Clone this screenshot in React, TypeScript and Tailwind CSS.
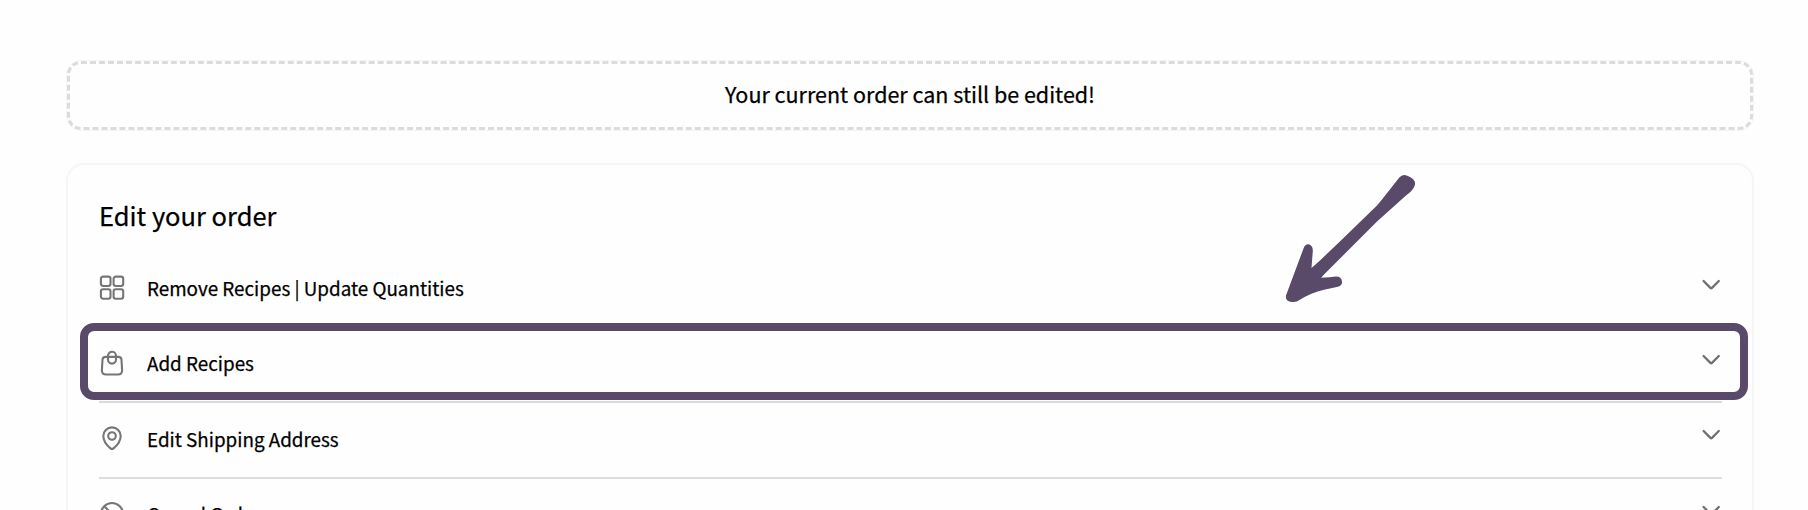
import type { ReactNode } from "react";

type Row = { label: string; icon: ReactNode; highlighted?: boolean };

const iconClass = "block h-[26px] w-[26px] fill-none stroke-[#757575]";

const GridIcon = () => (
  <svg viewBox="0 0 26 26" className={iconClass} strokeWidth="2.1">
    <rect x="1.9" y="1.6" width="9.6" height="9.4" rx="2.2" />
    <rect x="14.6" y="1.6" width="9.6" height="9.4" rx="2.2" />
    <rect x="1.9" y="14.3" width="9.6" height="9.4" rx="2.2" />
    <rect x="14.6" y="14.3" width="9.6" height="9.4" rx="2.2" />
  </svg>
);

const BagIcon = () => (
  <svg viewBox="0 0 26 26" className={iconClass} strokeWidth="2.1" strokeLinejoin="round">
    <path d="M6.6 6.9H19.4Q22.3 6.9 22.5 9.8L23.1 20.3Q23.2 24.5 19 24.5H7Q2.8 24.5 2.9 20.3L3.5 9.8Q3.7 6.9 6.6 6.9Z" />
    <rect x="9" y="1.8" width="8" height="11.8" rx="4" />
  </svg>
);

const PinIcon = () => (
  <svg viewBox="0 0 26 26" className={iconClass} strokeWidth="2.1" strokeLinejoin="round">
    <path d="M13 2.4C8 2.4 4.3 6.2 4.3 11C4.3 16.3 8.2 20.7 11.5 23.4Q13 24.6 14.5 23.4C17.8 20.7 21.7 16.3 21.7 11C21.7 6.2 18 2.4 13 2.4Z" />
    <circle cx="13" cy="11" r="3.8" />
  </svg>
);

const CancelIcon = () => (
  <svg viewBox="0 0 26 26" className={iconClass} strokeWidth="2.1">
    <circle cx="13" cy="13" r="11" />
    <path d="M5.2 5.2L20.8 20.8" />
  </svg>
);

const Chevron = () => (
  <svg viewBox="0 0 20 12" className="mr-[1px] block h-[12px] w-[20px] fill-none stroke-[#707070]" strokeWidth="2.3" strokeLinecap="round" strokeLinejoin="round">
    <path d="M2.6 2L9.4 8.9Q10.2 9.6 11 8.9L17.8 2" />
  </svg>
);

const rows: Row[] = [
  { label: "Remove Recipes | Update Quantities", icon: <GridIcon /> },
  { label: "Add Recipes", icon: <BagIcon />, highlighted: true },
  { label: "Edit Shipping Address", icon: <PinIcon /> },
  { label: "Cancel Order", icon: <CancelIcon /> },
];

const Arrow = () => (
  <svg viewBox="0 0 180 160" className="absolute top-[-5px] left-[1192px] h-[160px] w-[180px] fill-[#584a68]">
    <path d="M138.5 18.5Q143 12.5 149 16.5Q157 20.5 154.5 26Q153 30.5 146 35.5L117 61.5L83 95.5L65 113.5Q62.5 116 61.2 117.8Q70 117.3 76 116.5Q81.5 116.5 82 121.5Q82.5 125.5 78 126.8L64 129.8Q51 132.8 39.5 140Q36.5 142.5 32 142Q25 141.5 26 135.5L43.5 88.5Q45.5 83.5 49.5 84.5Q53 86 52.8 91L51.5 108L60 100.5L83 78.5L117 45.5L122 39.5Z" />
  </svg>
);

export default function App() {
  return (
    <main className="h-[510px] overflow-hidden bg-[#fefefe] pt-[60px] pr-[54px] pl-[66px] font-['Noto_Sans_CJK_SC',sans-serif] text-black [-webkit-text-stroke:0.25px_black]">
      <div className="h-[71px] rounded-[15px] border border-[#f5f5f5]">
        <div className="flex h-full items-center justify-center rounded-[14px] border-[3px] border-dashed border-[#dcdcdc]">
          <p className="pb-[4px] text-[21.5px] leading-none">Your current order can still be edited!</p>
        </div>
      </div>

      <section className="relative mt-[32px] h-[420px] rounded-[18px] border-2 border-[#f6f6f6] px-[31px] pt-[33px]">
        <h2 className="h-[55px] text-[25.5px] leading-[34px]">Edit your order</h2>
        <ul>
          {rows.map((row) => (
            <li key={row.label} className="relative h-[75.2px] w-[1623px]">
              <div className={row.highlighted ? "flex h-full items-start" : "flex h-full items-start border-b-2 border-[#dedede]"}>
                <div className="mt-[22px]">{row.icon}</div>
                <span className="mt-[23.3px] ml-[22px] flex-1 text-[18.84px] leading-[24px]">{row.label}</span>
                <div className="mt-[26px]"><Chevron /></div>
              </div>
              {row.highlighted && (
                <>
                  <div className="absolute inset-x-0 bottom-0 border-b-2 border-[#dcd9e0]" />
                  <div className="absolute top-[-5px] left-[-19px] h-[77px] w-[1668px] rounded-[14px] border-8 border-[#584a68]" />
                </>
              )}
            </li>
          ))}
        </ul>
        <Arrow />
      </section>
    </main>
  );
}
